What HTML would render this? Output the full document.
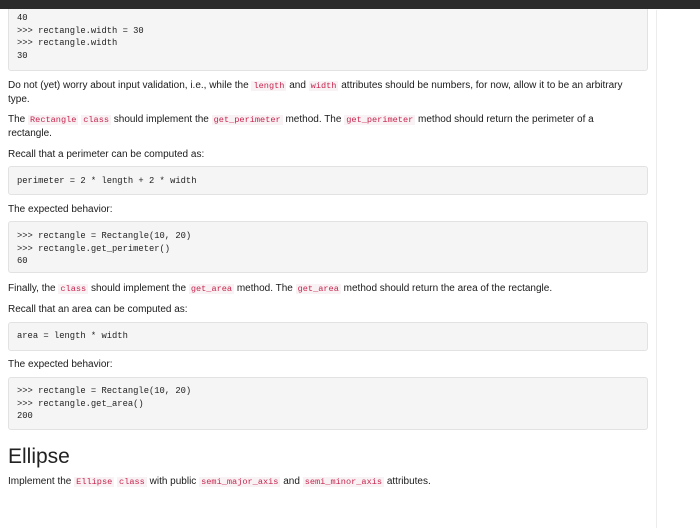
<!DOCTYPE html><html><head><style>
body{margin:0;width:700px;height:528px;background:#fff;position:relative;overflow:hidden;font-family:"Liberation Sans",sans-serif;font-size:10px;color:#1a1a1a}
.t{position:absolute;left:8px;white-space:nowrap;line-height:12px;margin-top:2px}
.b{position:absolute;left:8px;width:638px;background:#f5f5f5;border:1px solid #e2e2e2;border-radius:3px}
.c{position:absolute;left:8px;font-family:"Liberation Mono",monospace;font-size:8.8px;color:#222;white-space:nowrap;line-height:12.5px}
code{font-family:"Liberation Mono",monospace;font-size:8.6px;color:#c7254e;background:#f9f2f4;padding:0 2px}
</style></head><body>
<div style="position:absolute;left:656px;top:10px;width:1px;height:518px;background:#ececec"></div>
<div class="b" style="top:-4px;height:73px"><div class="c" style="top:15px">40<br>&gt;&gt;&gt; rectangle.width = 30<br>&gt;&gt;&gt; rectangle.width<br>30</div></div>
<div style="position:absolute;left:0;top:0;width:700px;height:9px;background:#2b2b2b"></div>
<div class="t" style="top:78px">Do not (yet) worry about input validation, i.e., while the <code>length</code> and <code>width</code> attributes should be numbers, for now, allow it to be an arbitrary</div>
<div class="t" style="top:92px">type.</div>
<div class="t" style="top:112px">The <code>Rectangle</code> <code>class</code> should implement the <code>get_perimeter</code> method. The <code>get_perimeter</code> method should return the perimeter of a</div>
<div class="t" style="top:126px">rectangle.</div>
<div class="t" style="top:147px">Recall that a perimeter can be computed as:</div>
<div class="b" style="top:166px;height:27px"><div class="c" style="top:8px">perimeter = 2 * length + 2 * width</div></div>
<div class="t" style="top:202px">The expected behavior:</div>
<div class="b" style="top:221px;height:50px"><div class="c" style="top:8px">&gt;&gt;&gt; rectangle = Rectangle(10, 20)<br>&gt;&gt;&gt; rectangle.get_perimeter()<br>60</div></div>
<div class="t" style="top:281px">Finally, the <code>class</code> should implement the <code>get_area</code> method. The <code>get_area</code> method should return the area of the rectangle.</div>
<div class="t" style="top:302px">Recall that an area can be computed as:</div>
<div class="b" style="top:322px;height:27px"><div class="c" style="top:7px">area = length * width</div></div>
<div class="t" style="top:357px">The expected behavior:</div>
<div class="b" style="top:377px;height:51px"><div class="c" style="top:7px">&gt;&gt;&gt; rectangle = Rectangle(10, 20)<br>&gt;&gt;&gt; rectangle.get_area()<br>200</div></div>
<div class="t" style="top:441px;font-size:21px;line-height:28px;color:#222">Ellipse</div>
<div class="t" style="top:474px">Implement the <code>Ellipse</code> <code>class</code> with public <code>semi_major_axis</code> and <code>semi_minor_axis</code> attributes.</div>
</body></html>
